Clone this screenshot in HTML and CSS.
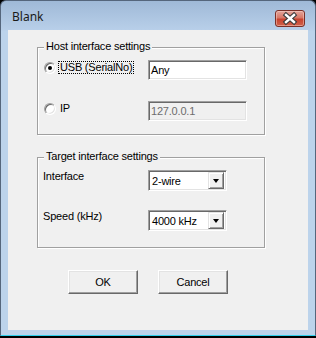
FILE: index.html
```html
<!DOCTYPE html>
<html lang="en">
<head>
    <meta charset="UTF-8">
    <meta name="viewport" content="width=device-width, initial-scale=1.0">
    <title>Blank</title>
    <link rel="stylesheet" href="styles.css">
</head>
<body>
    <div class="window">
        <div class="titlebar">
            <span class="title">Blank</span>
            <div class="close-btn">
                <svg width="28" height="15" viewBox="0 0 28 15">
                    <path d="M10 4 L18 11 M18 4 L10 11" stroke="#3b3b3b" stroke-width="4.6" stroke-linecap="square"/>
                    <path d="M10 4 L18 11 M18 4 L10 11" stroke="#ffffff" stroke-width="2.4" stroke-linecap="square"/>
                </svg>
            </div>
        </div>

        <div class="client">
            <div class="group host">
                <span class="group-title">Host interface settings</span>

                <div class="option">
                    <span class="radio checked"></span>
                    <span class="caption focus">USB (SerialNo)</span>
                </div>
                <div class="textbox">Any</div>

                <div class="option">
                    <span class="radio"></span>
                    <span class="caption">IP</span>
                </div>
                <div class="textbox disabled">127.0.0.1</div>
            </div>

            <div class="group target">
                <span class="group-title">Target interface settings</span>

                <span class="label">Interface</span>
                <div class="combo">
                    <span class="combo-value">2-wire</span>
                    <span class="combo-btn"><span class="arrow"></span></span>
                </div>

                <span class="label">Speed (kHz)</span>
                <div class="combo">
                    <span class="combo-value">4000 kHz</span>
                    <span class="combo-btn"><span class="arrow"></span></span>
                </div>
            </div>

            <div class="buttons">
                <button type="button" class="btn">OK</button>
                <button type="button" class="btn">Cancel</button>
            </div>
        </div>
    </div>
</body>
</html>
```

FILE: styles.css
```css
body {
    margin: 0;
    background: #000;
    font-family: "Liberation Sans", Arial, sans-serif;
    font-size: 11px;
    letter-spacing: -0.2px;
    color: #000;
}

/* window frame */
.window {
    width: 316px;
    height: 336px;
    box-sizing: border-box;
    border: 1px solid #55667c;
    border-bottom-color: #2fd0ec;
    border-radius: 6px 6px 0 0;
    background: linear-gradient(#9fb9d7, #b8cfe9 29px, #bcd3eb 30px);
    padding: 0 7px 5px;
    display: flex;
    flex-direction: column;
}

.titlebar {
    height: 29px;
    display: flex;
    justify-content: space-between;
    align-items: flex-start;
}

.title {
    font-family: "Noto Sans", "Open Sans", sans-serif;
    font-size: 12px;
    letter-spacing: 0;
    line-height: 16px;
    color: #1a1a1a;
    margin: 8px 0 0 4px;
}

.close-btn {
    width: 30px;
    height: 17px;
    box-sizing: border-box;
    margin: 9px 3px 0 0;
    border: 1px solid #7a3028;
    border-radius: 3px;
    background: linear-gradient(#e2a59b, #d77767 45%, #c8432f 55%, #d0624c);
    box-shadow: inset 0 0 0 1px rgba(255, 220, 210, 0.45);
    display: flex;
}

.client {
    flex: 1;
    background: #f0f0f0;
    padding: 17px 0 0 29px;
}

/* group boxes */
.group {
    position: relative;
    width: 228px;
    box-sizing: border-box;
    border: 1px solid #a0a0a0;
    box-shadow: 1px 1px 0 #fff, inset 1px 1px 0 #fff;
    display: grid;
    align-items: start;
}

.group-title {
    position: absolute;
    top: -8px;
    left: 6px;
    padding: 0 2px;
    line-height: 13px;
    background: #f0f0f0;
}

.host {
    grid-template-columns: 104px 99px;
    grid-auto-rows: 20px;
    row-gap: 21px;
    padding: 12px 0 13px 6px;
}

.target {
    margin-top: 22px;
    grid-template-columns: 105px 79px;
    grid-auto-rows: 21px;
    row-gap: 19px;
    padding: 12px 0 16px 5px;
}

.label {
    line-height: 13px;
}

/* radio options */
.option {
    display: flex;
    align-items: center;
    height: 13px;
    margin-top: 1px;
    gap: 2px;
}

.radio {
    width: 12px;
    height: 12px;
    box-sizing: border-box;
    border-radius: 50%;
    border: 1px solid;
    border-color: #a0a0a0 #fff #fff #a0a0a0;
    box-shadow: inset 1px 1px 0 #696969, inset -1px -1px 0 #e3e3e3;
    background: #fff;
    display: flex;
    align-items: center;
    justify-content: center;
}

.radio.checked::after {
    content: '';
    width: 4px;
    height: 4px;
    border-radius: 50%;
    background: #000;
}

.caption {
    line-height: 11px;
    padding: 0 1px;
    border: 1px solid transparent;
}

.caption.focus {
    border: 1px dotted #000;
}

/* text inputs */
.textbox {
    height: 20px;
    box-sizing: border-box;
    border: 1px solid;
    border-color: #a0a0a0 #fff #fff #a0a0a0;
    box-shadow: inset 1px 1px 0 #696969, inset -1px -1px 0 #e3e3e3;
    background: #fff;
    padding-left: 2px;
    display: flex;
    align-items: center;
}

.textbox.disabled {
    background: #f0f0f0;
    color: #6d6d6d;
}

/* combo boxes */
.combo {
    height: 21px;
    box-sizing: border-box;
    border: 1px solid;
    border-color: #a0a0a0 #fff #fff #a0a0a0;
    box-shadow: inset 1px 1px 0 #696969, inset -1px -1px 0 #e3e3e3;
    background: #fff;
    padding: 2px 2px 2px 3px;
    display: flex;
    align-items: center;
    justify-content: space-between;
}

.combo-btn {
    width: 16px;
    height: 17px;
    box-sizing: border-box;
    background: #f0f0f0;
    border: 1px solid;
    border-color: #e3e3e3 #696969 #696969 #e3e3e3;
    box-shadow: inset 1px 1px 0 #fff, inset -1px -1px 0 #a0a0a0;
    display: flex;
    align-items: center;
    justify-content: center;
}

.arrow {
    width: 0;
    height: 0;
    border-left: 3.5px solid transparent;
    border-right: 3.5px solid transparent;
    border-top: 4px solid #000;
    margin-top: 1px;
}

/* dialog buttons */
.buttons {
    display: flex;
    gap: 20px;
    margin: 22px 0 0 31px;
}

.btn {
    width: 70px;
    height: 24px;
    font-family: inherit;
    font-size: 11px;
    letter-spacing: inherit;
    color: #000;
    background: #f0f0f0;
    border: 1px solid;
    border-color: #fff #696969 #696969 #fff;
    box-shadow: inset -1px -1px 0 #a0a0a0, inset 1px 1px 0 #e3e3e3;
    padding: 0;
}
```
